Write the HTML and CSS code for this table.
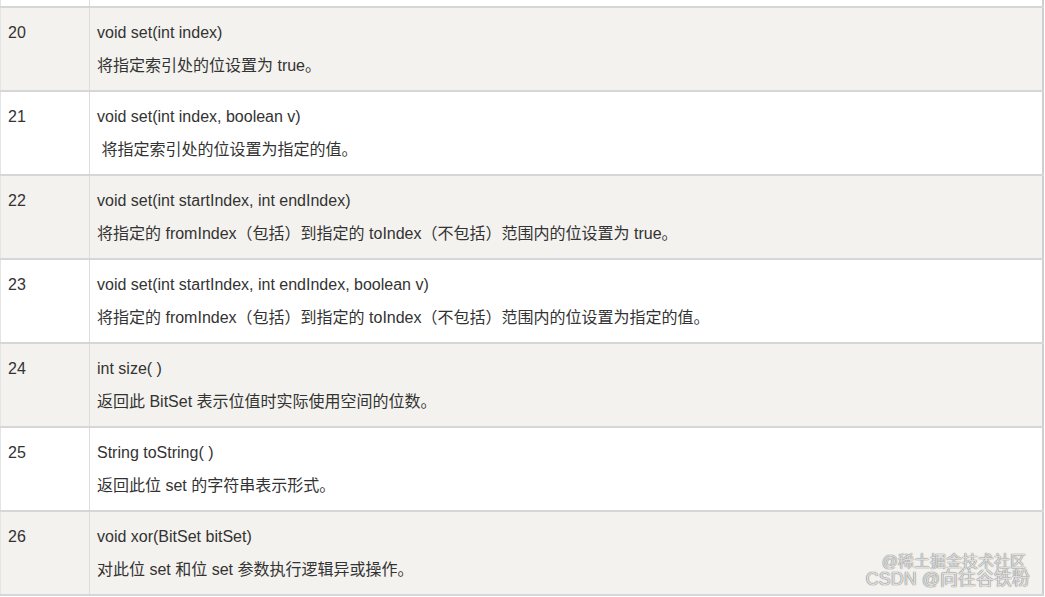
FILE: index.html
```html
<!DOCTYPE html>
<html lang="zh">
<head>
    <meta charset="UTF-8">
    <meta name="viewport" content="width=device-width, initial-scale=1.0">
    <title>BitSet 方法</title>
    <link rel="stylesheet" href="styles.css">
</head>
<body>

    <div class="wrap">
        <table class="method-table">
            <tr class="tail">
                <td class="num"></td>
                <td class="desc"></td>
            </tr>
            <tr class="odd">
                <td class="num">20</td>
                <td class="desc">
                    <p>void set(int index)</p>
                    <p>将指定索引处的位设置为 true。</p>
                </td>
            </tr>
            <tr>
                <td class="num">21</td>
                <td class="desc">
                    <p>void set(int index, boolean v)</p>
                    <p>&nbsp;将指定索引处的位设置为指定的值。</p>
                </td>
            </tr>
            <tr class="odd">
                <td class="num">22</td>
                <td class="desc">
                    <p>void set(int startIndex, int endIndex)</p>
                    <p>将指定的 fromIndex（包括）到指定的 toIndex（不包括）范围内的位设置为 true。</p>
                </td>
            </tr>
            <tr>
                <td class="num">23</td>
                <td class="desc">
                    <p>void set(int startIndex, int endIndex, boolean v)</p>
                    <p>将指定的 fromIndex（包括）到指定的 toIndex（不包括）范围内的位设置为指定的值。</p>
                </td>
            </tr>
            <tr class="odd">
                <td class="num">24</td>
                <td class="desc">
                    <p>int size( )</p>
                    <p>返回此 BitSet 表示位值时实际使用空间的位数。</p>
                </td>
            </tr>
            <tr>
                <td class="num">25</td>
                <td class="desc">
                    <p>String toString( )</p>
                    <p>返回此位 set 的字符串表示形式。</p>
                </td>
            </tr>
            <tr class="odd">
                <td class="num">26</td>
                <td class="desc">
                    <p>void xor(BitSet bitSet)</p>
                    <p>对此位 set 和位 set 参数执行逻辑异或操作。</p>
                </td>
            </tr>
        </table>

        <!-- 水印 -->
        <div class="watermark">
            <span class="wm-top">@稀土掘金技术社区</span>
            <span class="wm-bottom">CSDN @向往谷铁粉</span>
        </div>
    </div>

</body>
</html>
```

FILE: styles.css
```css
:root {
    --text: #333333;
    --row-gray: #f3f2ee;
    --line: #d6d6d6;
}
body {
    margin: 0;
    background: #ffffff;
    font-family: Arial, "Liberation Sans", "Noto Sans CJK SC", sans-serif;
    color: var(--text);
}
.wrap {
    position: relative;
    width: 1045px;
    height: 597px;
    overflow: hidden;
}
.method-table {
    width: 1044px;
    border-collapse: collapse;
    border-left: 1px solid #e4e4e4;
    border-right: 2px solid #cfcfcf;
}
.method-table tr {
    height: 84px;
    border-bottom: 2px solid var(--line);
}
.method-table tr.tail {
    height: 7px;
}
.method-table tr.odd {
    background: var(--row-gray);
}
.method-table td {
    padding: 0;
    vertical-align: top;
    font-size: 16px;
    line-height: 24px;
}
.num {
    width: 81px;
    padding: 13px 0 0 7px !important;
    border-right: 1px solid #dddddd;
}
.desc {
    padding: 13px 8px 0 7px !important;
}
.tail .num,
.tail .desc {
    padding: 0 !important;
}
.desc p {
    margin: 0 0 9px 0;
}

.watermark {
    position: absolute;
    right: 15px;
    bottom: 9px;
    display: flex;
    flex-direction: column;
    align-items: flex-end;
    color: rgba(255, 255, 255, 0.75);
    text-shadow: 0 0 1px #777, 0 0 1px #777;
    line-height: 1;
}
.wm-top {
    font-size: 16px;
    margin-right: 4px;
}
.wm-bottom {
    font-size: 18px;
}
```
